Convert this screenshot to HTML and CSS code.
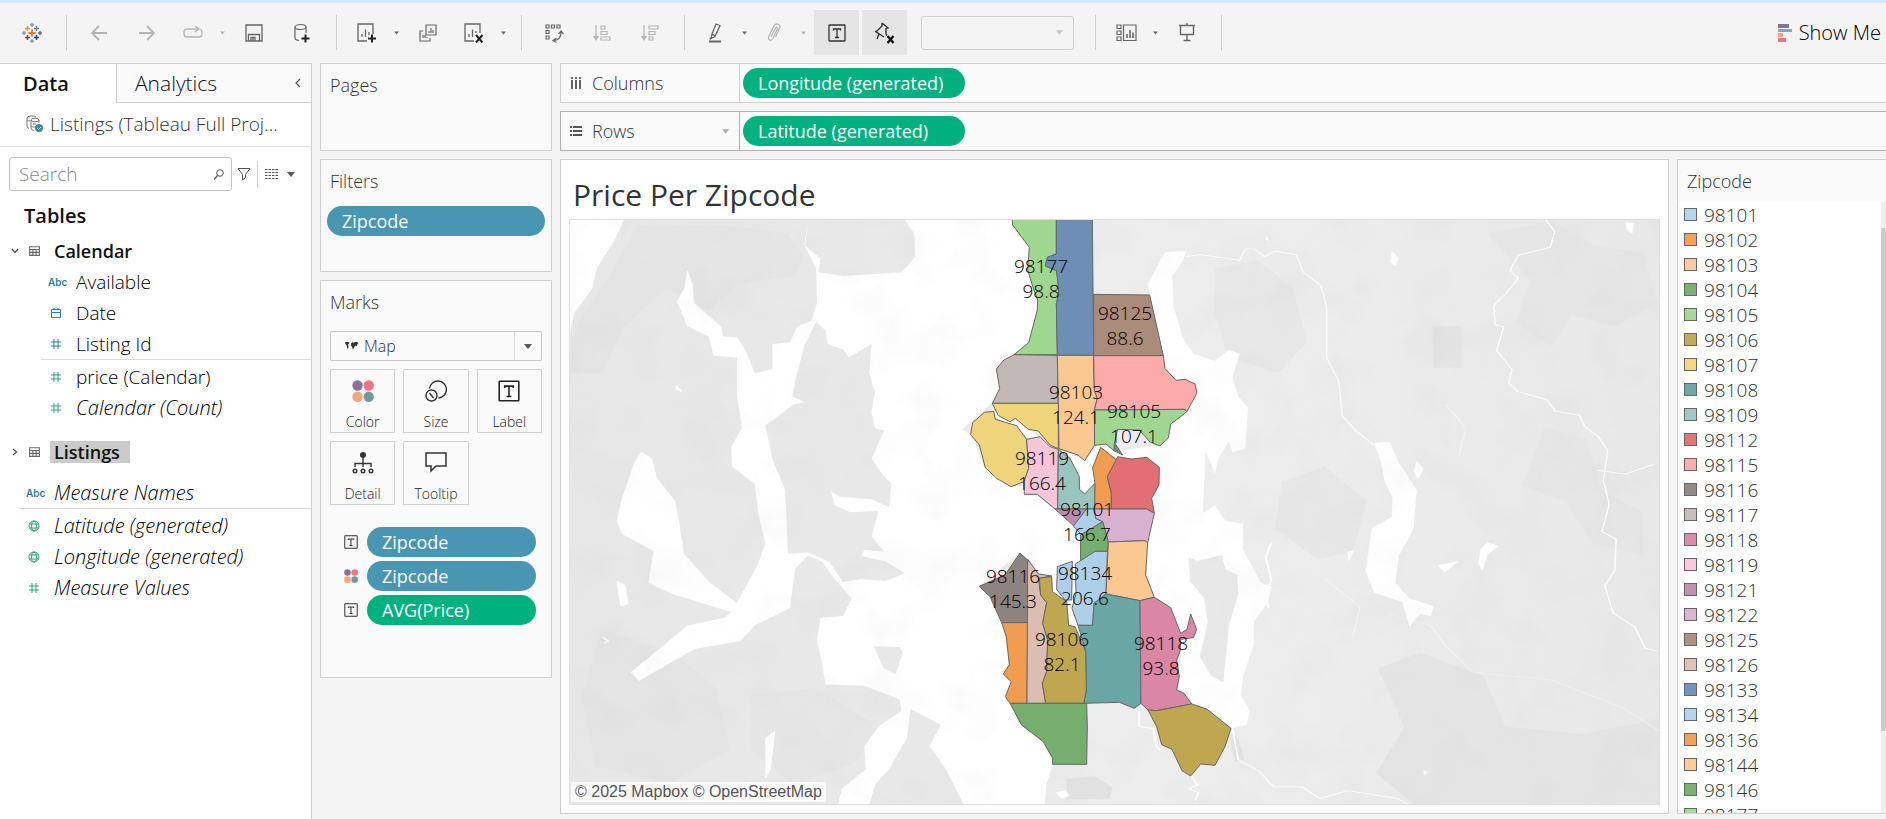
FILE: index.html
```html
<!DOCTYPE html>
<html lang="en">
<head>
<meta charset="utf-8">
<title>Price Per Zipcode</title>
<link rel="stylesheet" href="styles.css">
</head>
<body>
<svg class="defs" aria-hidden="true">
  <symbol id="caret" viewBox="0 0 8 5"><path d="M0 0h8L4 5z" fill="currentColor"/></symbol>
  <symbol id="hash" viewBox="0 0 12 12"><path d="M4 1v10M8 1v10M1 4h10M1 8h10" fill="none" stroke="currentColor"/></symbol>
  <symbol id="globe" viewBox="0 0 12 12"><g fill="none" stroke="currentColor"><circle cx="6" cy="6" r="5"/><ellipse cx="6" cy="6" rx="2.4" ry="5"/><path d="M1.5 4h9M1.5 8h9"/></g></symbol>
  <symbol id="table" viewBox="0 0 12 12"><path d="M1.500 2.500h9v8h-9zM1.500 5h9M1.500 7.700h9M4.500 5v5.500M7.500 5v5.500" fill="none" stroke="currentColor"/></symbol>
  <symbol id="tbox" viewBox="0 0 18 18"><g fill="none" stroke="currentColor" stroke-width="1.300"><rect x="1" y="1" width="16" height="16" rx=".5"/><path d="M5.500 6.500V5h7v1.500M9 5v8.500M7 13.500h4"/></g></symbol>
  <symbol id="dots" viewBox="0 0 20 20"><circle cx="5" cy="5" r="4.700" fill="#86719a"/><circle cx="15.200" cy="5" r="4.700" fill="#f7717f"/><circle cx="5" cy="15.200" r="4.700" fill="#f2a77f"/><circle cx="15.200" cy="15.200" r="4.700" fill="#6f99a3"/></symbol>
</svg>

<header class="toolbar">
  <button class="tool" aria-label="Start page"><svg width="20" height="20" viewBox="0 0 20 20" fill="none" stroke-width="1.400">
    <path d="M10 6.500v7M6.500 10h7" stroke="#e8762c" stroke-width="1.800"/><path d="M5.500 3v5M3 5.500h5" stroke="#eb9129"/><path d="M14.500 3v5M12 5.500h5" stroke="#59879b"/><path d="M5.500 12v5M3 14.500h5" stroke="#c72037"/><path d="M14.500 12v5M12 14.500h5" stroke="#1f457e"/><path d="M10 0v4M8 2h4M10 16v4M8 18h4M0 10h4M2 8v4" stroke="#7c9cb5"/><path d="M16 10h4M18 8v4" stroke="#5b6591"/></svg></button>
  <i class="sep"></i>
  <button class="tool off" aria-label="Undo"><svg width="18" height="18" viewBox="0 0 18 18"><path d="M9 2L2 9l7 7M2 9h15" fill="none" stroke="currentColor" stroke-width="1.800"/></svg></button>
  <button class="tool off" aria-label="Redo"><svg width="18" height="18" viewBox="0 0 18 18"><path d="M9 2l7 7-7 7M16 9H1" fill="none" stroke="currentColor" stroke-width="1.800"/></svg></button>
  <span class="split off"><button class="tool" aria-label="Replay"><svg width="20" height="16" viewBox="0 0 20 16"><path d="M15 4H4a3 3 0 0 0-3 3v2a3 3 0 0 0 3 3h12a3 3 0 0 0 3-3V7q0-2-2-3M12 1l4 3-4 3" fill="none" stroke="currentColor" stroke-width="1.300"/></svg></button><button class="more" aria-label="Replay options"><svg><use href="#caret"/></svg></button></span>
  <button class="tool" aria-label="Save"><svg width="18" height="18" viewBox="0 0 18 18"><path d="M1 1h16v16H1zM3.500 17v-6.500h11V17M6 17v-3.500h4V17M8 14v3" fill="none" stroke="currentColor" stroke-width="1.300"/></svg></button>
  <button class="tool" aria-label="New data source"><svg width="18" height="20" viewBox="0 0 18 20"><g fill="none" stroke="currentColor" stroke-width="1.200"><ellipse cx="7.500" cy="4" rx="5.500" ry="2.500"/><path d="M2 4v11q0 2 4 2.500M13 4v6"/></g><path d="M12.500 11.500v8M8.500 15.500h8" stroke="#222" stroke-width="2"/></svg></button>
  <i class="sep"></i>
  <span class="split"><button class="tool" aria-label="New worksheet"><svg width="20" height="20" viewBox="0 0 20 20"><path d="M10 18H1V1h15v10M5 14v-3M8.500 14V6.500M12 12V9" fill="none" stroke="currentColor" stroke-width="1.300"/><path d="M15 11.500v8M11 15.500h8" stroke="#222" stroke-width="2"/></svg></button><button class="more" aria-label="Worksheet options"><svg><use href="#caret"/></svg></button></span>
  <button class="tool" aria-label="Duplicate"><svg width="18" height="18" viewBox="0 0 18 18"><path d="M7 1h10v10H7zM10 9V7M12 9V4M14 9V6M4 7H1v10h10v-3M4 14v-3M6 14v-3M8 14v-1" fill="none" stroke="currentColor" stroke-width="1.200"/></svg></button>
  <span class="split"><button class="tool" aria-label="Clear sheet"><svg width="20" height="20" viewBox="0 0 20 20"><path d="M10 18H1V1h15v9M5 14v-3M8.500 14V6.500M12 10V8" fill="none" stroke="currentColor" stroke-width="1.300"/><path d="M12 12l6.500 7.500M18.500 12L12 19.500" stroke="#222" stroke-width="2"/></svg></button><button class="more" aria-label="Clear options"><svg><use href="#caret"/></svg></button></span>
  <i class="sep"></i>
  <button class="tool" aria-label="Swap rows and columns"><svg width="20" height="20" viewBox="0 0 20 20"><path d="M2 2h3v3H2zM7.500 2h3v3h-3zM13 2h3v3h-3zM2 7.500h3v3H2zM2 13h3v3H2zM17 9q0 8-7 8.500M14.500 11l2.500-3 2.500 3M12.500 15L9 17.500l3.500 2" fill="none" stroke="currentColor" stroke-width="1.200"/></svg></button>
  <button class="tool off" aria-label="Sort ascending"><svg width="18" height="18" viewBox="0 0 18 18"><path d="M3 1v13M8 2h4v3H8zM8 7.500h6v3H8zM8 13h9v3H8z" fill="none" stroke="currentColor" stroke-width="1.200"/><path d="M0 12h6l-3 5z" fill="currentColor"/></svg></button>
  <button class="tool off" aria-label="Sort descending"><svg width="18" height="18" viewBox="0 0 18 18"><path d="M3 1v13M8 2h9v3H8zM8 7.500h6v3H8zM8 13h4v3H8z" fill="none" stroke="currentColor" stroke-width="1.200"/><path d="M0 12h6l-3 5z" fill="currentColor"/></svg></button>
  <i class="sep"></i>
  <span class="split"><button class="tool" aria-label="Highlight"><svg width="16" height="20" viewBox="0 0 16 20"><path d="M9 1l4 1.500-5 11-4 2 1-4.500zM5 11l3 2M4 15l-1.500 1" fill="none" stroke="currentColor" stroke-width="1.300"/><path d="M2 17.500h12v2H2z" fill="currentColor"/></svg></button><button class="more" aria-label="Highlight options"><svg><use href="#caret"/></svg></button></span>
  <span class="split off"><button class="tool" aria-label="Group members"><svg width="14" height="19" viewBox="0 0 14 19"><path d="M4 14L8.500 5q1.500-1.500 2 .5L6 15.500q-2 3-4 1-1-1 0-3.500L7 3q2-3 4.500-1.500T12.500 5L8.500 14" fill="none" stroke="currentColor" stroke-width="1.200"/></svg></button><button class="more" aria-label="Group options"><svg><use href="#caret"/></svg></button></span>
  <button class="toggle" aria-pressed="true" aria-label="Show mark labels"><svg width="18" height="18"><use href="#tbox"/></svg></button>
  <button class="toggle" aria-pressed="true" aria-label="Unfix axes"><svg width="20" height="22" viewBox="0 0 20 22"><path d="M7 1l6 5-2 .5V12l1 1.500M7 1v3L2 9l-1.500.5L9 15M4 12l-2 5" fill="none" stroke="currentColor" stroke-width="1.400"/><path d="M12.500 14l6 7M18.500 14l-6 7" stroke="#111" stroke-width="2.300"/></svg></button>
  <span class="fit"><select aria-label="Fit" disabled><option></option></select><svg class="arrow"><use href="#caret"/></svg></span>
  <i class="sep"></i>
  <span class="split"><button class="tool" aria-label="Show cards"><svg width="21" height="18" viewBox="0 0 21 18"><path d="M1 1h4v3.500H1zM1 7h4v3.500H1zM1 13h4v3.500H1zM7.500 1H20v15.500H7.500z" fill="none" stroke="currentColor" stroke-width="1.200"/><path d="M11 14v-4M14 14V6M17 14V8.500" stroke="currentColor" stroke-width="1.600"/></svg></button><button class="more" aria-label="Card options"><svg><use href="#caret"/></svg></button></span>
  <button class="tool" aria-label="Presentation mode"><svg width="18" height="19" viewBox="0 0 18 19"><path d="M1 2.500h16M9 0v2M2.500 3v8.500h13V3M9 12v5M5.500 17.500h7" fill="none" stroke="currentColor" stroke-width="1.400"/></svg></button>
  <i class="sep"></i>
  <button class="showme"><svg width="14" height="18" viewBox="0 0 14 18"><path d="M0 0h11v4H0z" fill="#86719a"/><path d="M0 5h14v3H0z" fill="#82a4cd"/><path d="M0 9h5v4H0z" fill="#f2a77f"/><path d="M0 14h8v4H0z" fill="#f7717f"/></svg>Show Me</button>
</header>

<div class="workspace">
  <aside class="data">
    <div class="tabs"><button class="tab active">Data</button><button class="tab">Analytics</button><button class="fold" aria-label="Collapse pane"><svg width="6" height="10" viewBox="0 0 6 10"><path d="M5 1L1 5l4 4" fill="none" stroke="currentColor" stroke-width="1.200"/></svg></button></div>
    <div class="source"><svg width="18" height="18" viewBox="0 0 18 18" fill="none" stroke="#777"><path d="M1 3q0-2 4-2t5 1M1 3v8q0 2 2 2.500M1 5q1 1 3 1"/><ellipse cx="9" cy="5" rx="4" ry="1.800"/><path d="M5 5v8q0 2 3 2.500M13 5v3M7 9l3 0M5 11q2 1.500 4 1"/><circle cx="13" cy="13" r="4" fill="#3a88a5" stroke="none"/><path d="M11 13l1.500 1.500L15 12" stroke="#fff"/></svg><span>Listings (Tableau Full Proj...</span></div>
    <div class="find">
      <label class="search"><input type="text" placeholder="Search" aria-label="Search"><svg width="10" height="11" viewBox="0 0 10 11"><circle cx="6" cy="4" r="3.300" fill="none" stroke="#555"/><path d="M3.500 6.500L0 10.500" stroke="#555" stroke-width="1.300"/></svg></label>
      <button class="mini" aria-label="Filter fields"><svg width="14" height="14" viewBox="0 0 14 14"><path d="M1 1.500h12L8.500 7.500v3L5.500 13V7.500z" fill="none" stroke="currentColor"/></svg></button>
      <button class="mini list" aria-label="View as"><svg width="13" height="10" viewBox="0 0 13 10"><path d="M0 .5h13M0 3.500h13M0 6.500h13M0 9.500h13" stroke="currentColor" stroke-width="1" stroke-dasharray="2.500 1"/></svg><svg width="8" height="5"><use href="#caret"/></svg></button>
    </div>
    <h2>Tables</h2>
    <ul class="fields">
      <li class="group"><svg class="chev" viewBox="0 0 8 8"><path d="M1 2l3 3.500L7 2" fill="none" stroke="#555" stroke-width="1.300"/></svg><svg class="ticon"><use href="#table"/></svg><b>Calendar</b></li>
      <li class="leaf dim"><abbr>Abc</abbr><span>Available</span></li>
      <li class="leaf dim"><svg viewBox="0 0 12 12"><path d="M1.500 2.500h9v8h-9zM1.500 5.500h9M4 1v1.500M8 1v1.500" fill="none" stroke="currentColor"/></svg><span>Date</span></li>
      <li class="leaf dim"><svg><use href="#hash"/></svg><span>Listing Id</span></li>
    </ul>
    <ul class="fields ruled inner">
      <li class="leaf mea"><svg><use href="#hash"/></svg><span>price (Calendar)</span></li>
      <li class="leaf mea"><svg><use href="#hash"/></svg><em>Calendar (Count)</em></li>
    </ul>
    <ul class="fields second">
      <li class="group"><svg class="chev" viewBox="0 0 8 8"><path d="M2 1l3.500 3L2 7" fill="none" stroke="#555" stroke-width="1.300"/></svg><svg class="ticon"><use href="#table"/></svg><b class="picked">Listings</b></li>
    </ul>
    <ul class="fields third">
      <li class="root dim"><abbr>Abc</abbr><em>Measure Names</em></li>
    </ul>
    <ul class="fields ruled">
      <li class="root mea"><svg><use href="#globe"/></svg><em>Latitude (generated)</em></li>
      <li class="root mea"><svg><use href="#globe"/></svg><em>Longitude (generated)</em></li>
      <li class="root mea"><svg><use href="#hash"/></svg><em>Measure Values</em></li>
    </ul>
  </aside>

  <div class="cards">
    <section class="card pages"><h3>Pages</h3></section>
    <section class="card filters"><h3>Filters</h3><button class="pill blue">Zipcode</button></section>
    <section class="card marks">
      <h3>Marks</h3>
      <div class="marktype"><svg width="14" height="10" viewBox="0 0 14 10"><path d="M0 1h3.500l1 1-1.500 1.500L3.500 5 3 8.500 2 6.500 1.700 4.500.5 3zM6 2.500l1.500-1.500.8.800L11 .8l2.500 1-1 1.400-.8 2-1.200-.8-1 1-.6 1.600L7.700 8.500 7.200 6 6 4.500z" fill="#333"/></svg><select aria-label="Mark type"><option>Map</option></select><span><svg width="8" height="5"><use href="#caret"/></svg></span></div>
      <div class="grid">
        <button><svg width="22" height="22"><use href="#dots"/></svg>Color</button>
        <button><svg width="22" height="22" viewBox="0 0 22 22" fill="none" stroke="#333" stroke-width="1.400"><path d="M4.500 8.500a8.500 8.500 0 1 1 9 9.500"/><circle cx="6.500" cy="15.500" r="5.500"/><path d="M4.500 13l4 5"/></svg>Size</button>
        <button><svg width="22" height="22"><use href="#tbox"/></svg>Label</button>
        <button><svg width="22" height="22" viewBox="0 0 22 22" fill="none" stroke="#333" stroke-width="1.400"><circle cx="11" cy="3" r="3" fill="#333" stroke="none"/><path d="M11 6v9M3 15v-3.500h16V15"/><circle cx="3" cy="19" r="1.800"/><circle cx="11" cy="19" r="1.800"/><circle cx="19" cy="19" r="1.800"/></svg>Detail</button>
        <button><svg width="22" height="22" viewBox="0 0 22 22"><path d="M1 1h20v13H11l-5 5v-5H1z" fill="none" stroke="#333" stroke-width="1.500"/></svg>Tooltip</button>
      </div>
      <ul class="encodings">
        <li><svg><use href="#tbox"/></svg><button class="pill blue">Zipcode</button></li>
        <li><svg><use href="#dots"/></svg><button class="pill blue">Zipcode</button></li>
        <li><svg><use href="#tbox"/></svg><button class="pill green">AVG(Price)</button></li>
      </ul>
    </section>
  </div>

  <main>
    <div class="shelf"><div class="name"><svg width="12" height="12" viewBox="0 0 12 12"><path d="M2 0v2M2 3v9M6 0v2M6 3v9M10 0v2M10 3v9" stroke="#555" stroke-width="1.800"/></svg>Columns</div><button class="pill green">Longitude (generated)</button></div>
    <div class="shelf hot"><div class="name"><svg width="12" height="12" viewBox="0 0 12 12"><path d="M0 2h2M3 2h9M0 6h2M3 6h9M0 10h2M3 10h9" stroke="#555" stroke-width="1.800"/></svg>Rows<svg class="arrow"><use href="#caret"/></svg></div><button class="pill green">Latitude (generated)</button></div>
    <div class="sheet">
      <section class="view">
        <h1>Price Per Zipcode</h1>
        <div class="map">
          <svg viewBox="570 220 1089 584" preserveAspectRatio="xMidYMid slice" role="img" aria-label="Map of average price by zipcode">
            <defs>
              <filter id="mottle" x="0" y="0" width="100%" height="100%"><feTurbulence type="fractalNoise" baseFrequency=".022" numOctaves="4" seed="8"/><feColorMatrix values="0 0 0 0 .5  0 0 0 0 .5  0 0 0 0 .5  1.800 0 0 0 -.8"/></filter>
              <linearGradient id="ground"><stop offset="0" stop-color="#e7e7e7"/><stop offset=".35" stop-color="#e9e9e9"/><stop offset=".5" stop-color="#ededed"/><stop offset=".7" stop-color="#ececec"/><stop offset="1" stop-color="#e8e8e8"/></linearGradient>
            </defs>
            <rect x="570" y="220" width="1089" height="584" fill="url(#ground)"/>
            <g transform="translate(560 210) scale(.7079 .3884)">
              <g fill="#e2e2e2">
                <path d="M20 300L60 200 110 40H230L320 60 345 120 330 170 250 190 210 260 150 200 90 300 60 420 13 420z" opacity=".5"/>
                <path d="M1233 299h40v107h-40zM1155 1180l60-40 90 60 30 130 110 20 108-40v230h-340l-60-90 40-120z" opacity=".8"/>
                <path d="M1310 60l90-30 60 60 70 20 20 130-60 60-60-30-30 80-50-60 20-110zM1390 560l60 30 20 130 60 60v110l-70-30-40-110-60-40zM1020 700l60-40 60 90-20 130-50 20-60-80z" opacity=".45"/>
                <path d="M60 1080l100 60 60 90 20 160-90 90-100-50-20-180zM270 1250l90-20 90 100-30 90-90 60-60-90zM925 150l60-20 50 70 20 140-40 80-70-40-20-110z" opacity=".4"/>
                <path d="M715 1465l40-8 25 30-4 30h-60zM945 1350l12 6 10 60-14 4z"/>
              </g>
              <g fill="#fff">
                <path d="M13 26H90L78 75 52 150 45 205 20 265 13 320z"/>
                <path d="M487 26L500 60 502 120 483 160 400 170 365 160 368 125 345 90 350 30 346 95 362 150 363 240 355 285 335 300 325 340 300 345 300 410 275 420 262 360 250 328 230 325 228 300 208 270 190 240 187 190 180 155 176 200 165 235 180 300 210 325 217 375 250 380 250 480 257 560 242 610 243 660 275 705 280 780 290 860 280 910 250 1012 212 960 175 885 168 800 163 750 137 690 130 640 115 622 105 650 88 740 80 800 88 835 132 878 125 960 160 990 215 1020 242 1035 232 1050 180 1070 140 1130 100 1190 112 1212 190 1130 255 1110 275 1070 325 1025 332 925 350 890 370 905 388 950 412 1000 400 1045 368 1050 363 1110 370 1165 375 1222 430 1225 480 1260 482 1290 450 1330 430 1380 432 1440 398 1490 393 1530H685L687 1480 696 1428 682 1370 650 1325 637 1270 630 1255 637 1215 626 1195 635 1170 625 1062 612 1000 593 968 650 882 680 935 695 940 698 985 718 1070 745 1120 730 1060 727 1000 728 915 736 900V840L725 815 700 770 674 735 656 735V710L638 712 600 665 582 580 568 565 611 495 621 460 617 405 642 370 663 340 675 250 663 95 640 26z"/>
                <path d="M609 515L650 550 700 615 725 630 741 645 757 605 790 620 830 610 847 605 860 585 863 560 885 515 900 470 895 445 870 438 855 405 850 370 833 218 830 190 845 140 855 108 885 105 880 130 865 170 867 250 880 330 895 370 925 388 945 360 960 370 950 430 958 480 972 510 968 615 950 625 945 595 930 640 925 680 912 620 908 780 925 760 940 800 965 808 965 875 990 960 1005 970 1000 1010 980 1060 980 1120 965 1200 962 1250 975 1290 970 1325 948 1335 915 1285 893 1270 872 1235 877 1150 862 1020 840 995 828 940 830 855 840 780 836 740 847 700 845 655 830 637 790 640 757 620 755 710 741 730 728 690 700 620 650 575 612 530z"/>
                <path d="M1150 600L1172 597 1185 650 1210 720 1206 820 1185 890 1180 960 1200 1000 1235 1020 1230 1045 1215 1040 1200 1072 1190 1010 1150 985 1138 930 1147 820 1175 790 1176 740 1165 700 1160 650z"/>
                <path d="M1175 105l10 20-5 20-7-10zM1210 645l10 20-8 28-6-20zM1300 875l10-20 16 10-15 20-8 45-6-20zM1240 915l30-12-20 30zM1505 30l12 5-2 25-8-6zM1112 880l10-5-8 30zM700 1500l14-6 6 14-12 8zM80 955l12 10 5 50-12 5zM165 450l8 18-10-6zM290 1360l14-20-6 100-8 25zM366 415l30-50 14 12-24 30-16 14zM998 65l4 15-5-4zM1220 1440l6 8-6 8z"/>
              </g>
              <g fill="#e8e8e8">
                <path d="M362 288L375 310 378 345 400 360 408 380 440 345 437 420 445 470 440 520 445 562 458 568 440 640 455 680 468 705 465 765 440 745 395 738 383 725 388 760 410 778 450 775 440 840 458 880 430 875 425 890 460 905 487 935 460 955 425 950 400 958 380 905 350 882 322 885 318 720 300 640 290 555 330 500 347 495 328 480 335 420 345 350z"/>
                <path d="M495 1285L538 1325 522 1380 545 1440 570 1530H437L445 1480 465 1440 490 1360zM443 1123L480 1125 484 1140 474 1195 457 1180z"/>
                <path d="M888 895L900 903 935 888 940 925 957 940 958 990 945 1070 937 1215 920 1200 904 1150 915 1060 910 1000 890 955z"/>
              </g>
              <g fill="none" stroke="#fff" stroke-width="1.500" stroke-linejoin="round">
                <path d="M885 120L905 115 960 130 968 100 980 100 995 120 1010 106 1040 115 1050 160 1075 195 1083 250 1083 380 1100 440 1105 530 1125 570 1150 605" stroke-width="2"/>
                <path d="M1393 26l12 30-6 40-45 20-12 40 12 20-18 40-17 30 2 50 12 5-10 60 22 50-5 35 14 22 40 20 12 30 34 10 8 30 18 25 14 35-6 80 8 60-10 70 20 20-2 80-14 40 12 70 30 35 15 55 17 8M1465 670l40 10 40-25" stroke-width="2"/>
                <path d="M950 1335l8 80 30 30 20 40 40 0 25 30 40-20 70 20 15 15" stroke-width="2"/>
                <path d="M818 1290v40l20 5 4 45 8 15M890 1450l10 30-12 10 14 10-4 20M755 1115l30 60 8 40 28 50" stroke-width="2.500"/>
                <path d="M1005 855l-8 40 8 60-10 30 6 40M60 1100l8 10-6 6" stroke-width="3"/>
                <path d="M1170 1040l60 30 20 50 40 70 110 20 100 70 60 70M1250 500l30 60-10 70M1080 950l50 70-10 80" opacity=".5"/>
              </g>
            </g>
            <rect x="570" y="220" width="1089" height="584" filter="url(#mottle)" class="mottle"/>
            <g class="zips" transform="translate(950 210) scale(.33333)">
              <path fill="#9fd791" d="M186 20L188 45 238 112 233 180 250 235 263 270 262 300 236 398 192 434H322L319 280 327 250 320 182 286 168 292 142 319 132V20z"/>
              <path fill="#6d8fb5" d="M319 20H427L431 436H322L319 280 327 250 320 182 286 168 292 142 319 132z"/>
              <path fill="#ab8c7a" d="M431 253L599 255 640 437H431z"/>
              <path fill="#c2b9b7" d="M192 434L322 436 325 580H127L149 536 139 477 162 450z"/>
              <path fill="#fcc892" d="M322 436H430L433 540 442 565 433 600 434 705 404 752 384 735 327 716 325 580z"/>
              <path fill="#fdaaaa" d="M431 437H640L645 476 678 511 705 508 735 522 741 549 710 606 705 598 433 600 442 565 433 540z"/>
              <path fill="#9fd791" d="M433 600L705 598 710 606 662 642 655 684 630 708 600 696 568 660 503 658 493 700 492 722 468 702 434 706z"/>
              <path fill="#8c8482" d="M495 700L518 735 492 722z"/>
              <path fill="#efd47c" d="M127 580H325V716L300 705 265 663 235 658 196 625 180 635 145 617z"/>
              <path fill="#efd47c" d="M131 604L136 628 200 647 230 688 236 775 222 815 183 830 140 805 106 773 88 705 62 674 68 638 103 607z"/>
              <path fill="#f6c5d8" d="M230 688L270 680 300 710 325 718 323 897H315L262 853H223L222 815 236 775z"/>
              <path fill="#9ac4bf" d="M325 718L360 745 388 800V838L404 852 435 820 434 897H323z"/>
              <path fill="#f09d4f" d="M452 712L500 750 497 760 472 800 484 850V897H434L435 820 428 773z"/>
              <path fill="#e27072" d="M503 740L545 747 590 742 628 772 627 825 605 865 613 910 590 897H484V850L472 800z"/>
              <path fill="#ba8cae" d="M315 897H410L372 948z"/>
              <path fill="#aecfe9" d="M410 897H434L437 925 458 935 395 975 370 948z"/>
              <path fill="#d6b2d0" d="M434 897H590L613 910 593 998 585 992 475 996 458 935 437 925z"/>
              <path fill="#76ae70" d="M458 935L475 996 472 1024H435L392 1055 391 975z"/>
              <path fill="#aecfe9" d="M472 1024L468 1152 432 1180 428 1246H384L366 1195 378 1150 376 1062 435 1024zM322 1070L367 1054 365 1170H345L320 1138z"/>
              <path fill="#fcc892" d="M475 996L585 992 593 998 587 1095 613 1162 570 1172 468 1152z"/>
              <path fill="#6aa6a3" d="M468 1152L570 1172 573 1480 553 1495 508 1477 401 1480 409 1440 407 1322 384 1246H428L432 1180z"/>
              <path fill="#d987a5" d="M570 1172L613 1162 662 1193 692 1270 711 1258 722 1212 740 1259 730 1283 692 1288 690 1325 680 1350 688 1400 680 1440 702 1450 725 1482 620 1502 594 1500 573 1480z"/>
              <path fill="#bfa750" d="M594 1500L620 1502 725 1482 770 1497 843 1555 825 1610 795 1666 752 1662 722 1698 696 1682 666 1618 635 1604 620 1550z"/>
              <path fill="#8d8482" d="M210 1029L233 1050V1238H155L120 1160 88 1129 165 1095z"/>
              <path fill="#f09d4f" d="M155 1238H233L231 1480H180L166 1460 184 1415 160 1392 178 1364 169 1280z"/>
              <path fill="#dbbdb1" d="M233 1048L265 1092 305 1098 265 1105 272 1155 290 1178 278 1240 293 1290 290 1385 277 1420 287 1480H231z"/>
              <path fill="#bfa750" d="M268 1105L305 1100 307 1145 350 1175 356 1246 375 1250 407 1325 409 1440 401 1480H287L277 1420 290 1385 293 1290 278 1240 290 1178 272 1155z"/>
              <path fill="#76ae70" d="M180 1480H410L412 1550 410 1663H308V1645L280 1595 215 1545z"/>
            </g>
            <g class="labels">
              <text x="1041" y="273">98177</text><text x="1041" y="298">98.8</text>
              <text x="1125" y="320">98125</text><text x="1125" y="345">88.6</text>
              <text x="1076" y="399">98103</text><text x="1076" y="424">124.1</text>
              <text x="1134" y="418">98105</text><text x="1134" y="443">107.1</text>
              <text x="1042" y="465">98119</text><text x="1042" y="490">166.4</text>
              <text x="1087" y="516">98101</text><text x="1087" y="541">166.7</text>
              <text x="1013" y="583">98116</text><text x="1013" y="608">145.3</text>
              <text x="1085" y="580">98134</text><text x="1085" y="605">206.6</text>
              <text x="1062" y="646">98106</text><text x="1062" y="671">82.1</text>
              <text x="1161" y="650">98118</text><text x="1161" y="675">93.8</text>
            </g>
          </svg>
          <p class="credit">© 2025 Mapbox © OpenStreetMap</p>
        </div>
      </section>
      <section class="legend">
        <h3>Zipcode</h3>
        <div class="scroll">
          <ul>
            <li><i style="background:#b4d5ee"></i>98101</li><li><i style="background:#f5a352"></i>98102</li><li><i style="background:#ffcb97"></i>98103</li><li><i style="background:#7bb272"></i>98104</li><li><i style="background:#a3da95"></i>98105</li><li><i style="background:#c4ac56"></i>98106</li><li><i style="background:#f5d880"></i>98107</li><li><i style="background:#6daaa7"></i>98108</li><li><i style="background:#9fc9c5"></i>98109</li><li><i style="background:#e77577"></i>98112</li><li><i style="background:#ffaead"></i>98115</li><li><i style="background:#938a88"></i>98116</li><li><i style="background:#c8bebb"></i>98117</li><li><i style="background:#dd8bab"></i>98118</li><li><i style="background:#fccadc"></i>98119</li><li><i style="background:#bf92b3"></i>98121</li><li><i style="background:#dab5d4"></i>98122</li><li><i style="background:#b0917f"></i>98125</li><li><i style="background:#e0c3b7"></i>98126</li><li><i style="background:#7194ba"></i>98133</li><li><i style="background:#b4d5ee"></i>98134</li><li><i style="background:#f5a352"></i>98136</li><li><i style="background:#ffcb97"></i>98144</li><li><i style="background:#7bb272"></i>98146</li><li><i style="background:#a3da95"></i>98177</li>
          </ul>
          <div class="track"><div class="thumb"></div></div>
        </div>
      </section>
    </div>
  </main>
</div>
</body>
</html>
```
FILE: styles.css
```css
* { box-sizing: border-box; }
body { margin: 0; height: 100vh; overflow: hidden; display: flex; flex-direction: column; background: #f4f4f4; color: #111; font: 300 18px/24px "Open Sans", sans-serif; }
button, select, input { font: inherit; color: inherit; border: 0; background: none; padding: 0; margin: 0; }
ul { list-style: none; margin: 0; padding: 0; }
h1, h2, h3, p { margin: 0; }
h3 { font-size: 18px; font-weight: 300; color: #333; }
svg { flex: none; }
.defs { position: absolute; width: 0; height: 0; }

.toolbar { flex: none; display: flex; align-items: center; height: 63px; padding: 0 5px 1px 8px; border-top: 3px solid #cfe8ff; color: #666; }
.tool { width: 48px; height: 40px; display: flex; align-items: center; justify-content: center; flex: none; }
.off { color: #b4b4b4; }
.sep { width: 1px; height: 35px; margin: 0 8px 0 10px; background: #d0d0d0; flex: none; }
.split { display: flex; align-items: center; }
.split .tool { width: 44px; }
.more { width: 15px; height: 40px; display: flex; align-items: center; justify-content: center; }
.more svg { width: 5px; height: 4px; }
.toggle { width: 45px; height: 45px; background: #e5e5e5; color: #333; display: flex; align-items: center; justify-content: center; flex: none; margin-left: 3px; }
.fit { position: relative; width: 153px; height: 34px; margin: 0 11px 0 14px; border: 1px solid #d0d0d0; border-radius: 3px; display: flex; align-items: center; padding-right: 10px; }
.fit select { flex: 1; appearance: none; height: 100%; }
.arrow { width: 7px; height: 5px; color: #c4c4c4; }
.showme { margin-left: auto; display: flex; align-items: center; gap: 7px; font-size: 20px; color: #000; white-space: nowrap; }

.workspace { flex: 1; min-height: 0; display: flex; }
.data { width: 312px; flex: none; background: #fff; border: solid #d0d0d0; border-width: 1px 1px 0 0; font-size: 19px; }
.tabs { display: flex; height: 39px; font-size: 21px; }
.tab { background: #fafafa; border-bottom: 1px solid #d0d0d0; padding: 0 0 0 18px; text-align: left; flex: 1; }
.tab.active { flex: none; width: 117px; padding-left: 23px; background: #fff; border: solid #d0d0d0; border-width: 0 1px 0 0; font-size: 20px; font-weight: 600; }
.fold { width: 16px; background: #fafafa; border-bottom: 1px solid #d0d0d0; color: #555; text-align: left; display: flex; align-items: center; }
.source { display: flex; align-items: center; gap: 6px; height: 44px; padding: 0 0 1px 26px; border-bottom: 1px solid #e2e2e2; color: #333; white-space: nowrap; }
.find { display: flex; align-items: center; padding: 10px 0 0 9px; }
.search { width: 223px; height: 34px; border: 1px solid #c4c4c4; border-radius: 3px; display: flex; align-items: center; padding: 0 7px 0 9px; }
.search input { flex: 1; min-width: 0; outline: 0; }
.search input::placeholder { color: #888; }
.mini { display: flex; align-items: center; height: 27px; color: #555; padding: 0 6px 0 5px; }
.mini.list { border-left: 1px solid #d0d0d0; gap: 9px; padding-left: 7px; }
h2 { font-size: 20px; line-height: 32px; font-weight: 600; padding: 9px 0 3px 24px; }
.fields li { display: flex; align-items: center; height: 31px; white-space: nowrap; }
.fields svg { width: 12px; height: 12px; color: #666; }
.fields b { font-size: 18px; font-weight: 600; padding: 0 10px 0 4px; line-height: 22px; }
.fields em { font-size: 20px; }
.fields abbr { font: 600 10px/12px Inter, sans-serif; width: 16px; }
.group .chev { width: 8px; height: 8px; margin: 0 9px 0 11px; }
.group .ticon { width: 13px; height: 13px; margin-right: 9px; }
.picked { background: #cbcbcb; }
.leaf { padding-left: 48px; }
.leaf svg { margin: 0 2px; }
.leaf span, .leaf em { margin-left: 12px; }
.root { padding-left: 26px; }
.root svg { margin: 0 2px; }
.root em { margin-left: 12px; }
.dim, .fields .dim svg { color: #2f7d9c; }
.mea, .fields .mea svg { color: #2ca579; }
.fields span, .fields em { color: #000; }
.ruled { border-top: 1px solid #dcdcdc; padding-top: 1px; margin-left: 19px; }
.ruled .root { padding-left: 7px; }
.ruled.inner { margin-left: 41px; }
.inner .leaf { padding-left: 7px; }
.second { margin-top: 13px; }
.third { margin-top: 10px; }

.cards { width: 232px; flex: none; margin-left: 8px; display: flex; flex-direction: column; gap: 8px; }
.card { background: #fafafa; border: 1px solid #d0d0d0; padding: 9px 9px 0; }
.pages { height: 88px; }
.filters { height: 113px; padding: 9px 6px 0; }
.filters h3 { padding-left: 3px; margin-bottom: 13px; }
.marks { height: 398px; }
.pill { height: 30px; border-radius: 15px; color: #fff; font-weight: 500; text-align: left; padding: 0 15px; white-space: nowrap; }
.blue { background: #4996b2; }
.green { background: #00b180; }
.filters .pill { width: 100%; }
.marktype { display: flex; align-items: center; height: 30px; margin-top: 17px; border: 1px solid #c8c8c8; border-radius: 2px; padding-left: 14px; gap: 5px; font-size: 16px; color: #333; }
.marktype select { flex: 1; appearance: none; }
.marktype span { width: 27px; height: 28px; border-left: 1px solid #dcdcdc; display: flex; align-items: center; justify-content: center; color: #555; }
.grid { display: grid; grid-template-columns: repeat(3, 1fr); gap: 8px; margin-top: 8px; }
.grid button { height: 64px; border: 1px solid #d0d0d0; display: flex; flex-direction: column; align-items: center; justify-content: space-between; padding: 10px 0 0; font-size: 14px; line-height: 20px; color: #222; }
.encodings { display: grid; gap: 4px; margin: 22px 6px 0 14px; }
.encodings li { display: flex; align-items: center; gap: 9px; }
.encodings svg { width: 14px; height: 14px; color: #333; }
.encodings .pill { flex: 1; }

main { flex: 1; min-width: 0; margin-left: 8px; display: flex; flex-direction: column; gap: 8px; padding-bottom: 5px; }
.shelf { flex: none; display: flex; align-items: center; height: 40px; background: #fafafa; border: solid #d0d0d0; border-width: 1px 0 1px 1px; }
.name { width: 179px; align-self: stretch; display: flex; align-items: center; gap: 10px; padding: 0 10px 0 9px; border-right: 1px solid #d0d0d0; color: #333; margin-right: 3px; }
.name .arrow { margin-left: auto; color: #aaa; }
.shelf .pill { width: 222px; }
.hot, .hot .name { border-color: #b0b0b0; }
.sheet { flex: 1; min-height: 0; display: flex; gap: 8px; }
.view { flex: 1; min-width: 0; background: #fff; border: 1px solid #d0d0d0; padding: 15px 8px 8px; display: flex; flex-direction: column; }
h1 { font: 400 30px/40px "Open Sans", sans-serif; color: #333; padding-left: 4px; margin-bottom: 4px; }
.map { position: relative; flex: 1; min-height: 0; border: 1px solid #e0e0e0; }
.map > svg { display: block; width: 100%; height: 100%; }
.mottle { opacity: .1; }
.zips path { stroke: #666; stroke-width: 3; stroke-linejoin: round; }
.labels { font: 300 19px "Open Sans", sans-serif; text-anchor: middle; fill: #000; }
.credit { position: absolute; left: 1px; bottom: 2px; background: #ffffffcc; padding: 0 4px; font: 16px/20px "Liberation Sans", sans-serif; color: #555; }
.legend { width: 209px; flex: none; background: #fafafa; border: solid #d0d0d0; border-width: 1px 0 1px 1px; display: flex; flex-direction: column; }
.legend h3 { padding: 9px 9px; }
.scroll { flex: 1; min-height: 0; overflow: hidden; background: #fff; display: flex; }
.scroll ul { flex: 1; }
.scroll li { display: flex; align-items: center; gap: 7px; height: 25px; padding-left: 6px; font-size: 19px; color: #333; }
.scroll i { width: 13px; height: 13px; border: 1px solid #666; }
.track { width: 5px; background: #efefef; padding-top: 26px; }
.thumb { height: 86%; background: #cbcbcb; }
```
